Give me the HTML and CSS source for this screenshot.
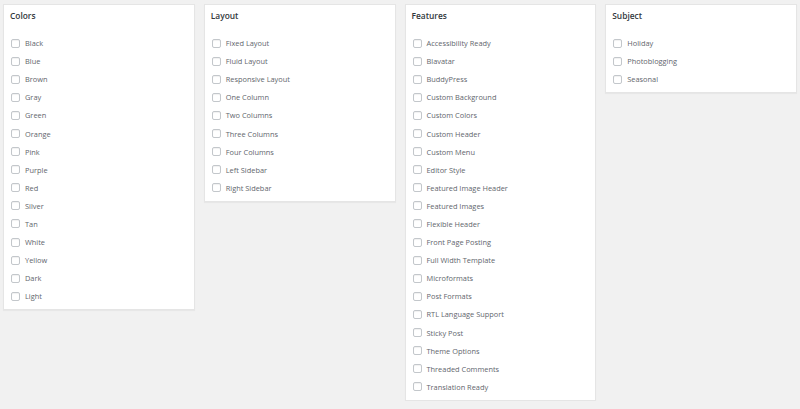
FILE: index.html
```html
<!DOCTYPE html>
<html lang="en">
<head>
    <meta charset="UTF-8">
    <title>Feature Filter</title>
    <link rel="stylesheet" href="styles.css">
</head>
<body>
    <div class="filters">
        <div class="filter-group">
            <h4>Colors</h4>
            <ol class="feature-list">
                <li><label><input type="checkbox"> Black</label></li>
                <li><label><input type="checkbox"> Blue</label></li>
                <li><label><input type="checkbox"> Brown</label></li>
                <li><label><input type="checkbox"> Gray</label></li>
                <li><label><input type="checkbox"> Green</label></li>
                <li><label><input type="checkbox"> Orange</label></li>
                <li><label><input type="checkbox"> Pink</label></li>
                <li><label><input type="checkbox"> Purple</label></li>
                <li><label><input type="checkbox"> Red</label></li>
                <li><label><input type="checkbox"> Silver</label></li>
                <li><label><input type="checkbox"> Tan</label></li>
                <li><label><input type="checkbox"> White</label></li>
                <li><label><input type="checkbox"> Yellow</label></li>
                <li><label><input type="checkbox"> Dark</label></li>
                <li><label><input type="checkbox"> Light</label></li>
            </ol>
        </div>
        <div class="filter-group">
            <h4>Layout</h4>
            <ol class="feature-list">
                <li><label><input type="checkbox"> Fixed Layout</label></li>
                <li><label><input type="checkbox"> Fluid Layout</label></li>
                <li><label><input type="checkbox"> Responsive Layout</label></li>
                <li><label><input type="checkbox"> One Column</label></li>
                <li><label><input type="checkbox"> Two Columns</label></li>
                <li><label><input type="checkbox"> Three Columns</label></li>
                <li><label><input type="checkbox"> Four Columns</label></li>
                <li><label><input type="checkbox"> Left Sidebar</label></li>
                <li><label><input type="checkbox"> Right Sidebar</label></li>
            </ol>
        </div>
        <div class="filter-group">
            <h4>Features</h4>
            <ol class="feature-list">
                <li><label><input type="checkbox"> Accessibility Ready</label></li>
                <li><label><input type="checkbox"> Blavatar</label></li>
                <li><label><input type="checkbox"> BuddyPress</label></li>
                <li><label><input type="checkbox"> Custom Background</label></li>
                <li><label><input type="checkbox"> Custom Colors</label></li>
                <li><label><input type="checkbox"> Custom Header</label></li>
                <li><label><input type="checkbox"> Custom Menu</label></li>
                <li><label><input type="checkbox"> Editor Style</label></li>
                <li><label><input type="checkbox"> Featured Image Header</label></li>
                <li><label><input type="checkbox"> Featured Images</label></li>
                <li><label><input type="checkbox"> Flexible Header</label></li>
                <li><label><input type="checkbox"> Front Page Posting</label></li>
                <li><label><input type="checkbox"> Full Width Template</label></li>
                <li><label><input type="checkbox"> Microformats</label></li>
                <li><label><input type="checkbox"> Post Formats</label></li>
                <li><label><input type="checkbox"> RTL Language Support</label></li>
                <li><label><input type="checkbox"> Sticky Post</label></li>
                <li><label><input type="checkbox"> Theme Options</label></li>
                <li><label><input type="checkbox"> Threaded Comments</label></li>
                <li><label><input type="checkbox"> Translation Ready</label></li>
            </ol>
        </div>
        <div class="filter-group">
            <h4>Subject</h4>
            <ol class="feature-list">
                <li><label><input type="checkbox"> Holiday</label></li>
                <li><label><input type="checkbox"> Photoblogging</label></li>
                <li><label><input type="checkbox"> Seasonal</label></li>
            </ol>
        </div>
    </div>
</body>
</html>
```

FILE: styles.css
```css
body {
    font-family: "Open Sans", "Liberation Sans", sans-serif;
    margin: 0;
    padding: 0;
    background-color: #f1f1f1;
    color: #5f666d;
}
.filters {
    display: grid;
    grid-template-columns: repeat(4, 1fr);
    gap: 9px;
    align-items: start;
    padding: 4px 3px 0 3px;
}
.filter-group {
    background-color: #fff;
    border: 1px solid #e5e5e5;
    box-shadow: 0 1px 1px rgba(0, 0, 0, 0.04);
    padding: 5px 6px 4px 6px;
}
.filter-group h4 {
    margin: 0;
    font-size: 8.4px;
    font-weight: 600;
    line-height: 12px;
    color: #32373c;
}
.feature-list {
    list-style: none;
    margin: 12px 0 0 0;
    padding: 0;
}
.feature-list li {
    height: 18.1px;
    font-size: 7.4px;
    display: flex;
    align-items: center;
}
.feature-list label {
    display: flex;
    align-items: center;
    gap: 5px;
}
.feature-list input {
    appearance: none;
    -webkit-appearance: none;
    width: 9px;
    height: 9px;
    margin: 0 0 0 1px;
    border: 1px solid #c3c7cb;
    border-radius: 2px;
    background-color: #fff;
    box-shadow: inset 0 1px 1px rgba(0, 0, 0, 0.06);
}
```
